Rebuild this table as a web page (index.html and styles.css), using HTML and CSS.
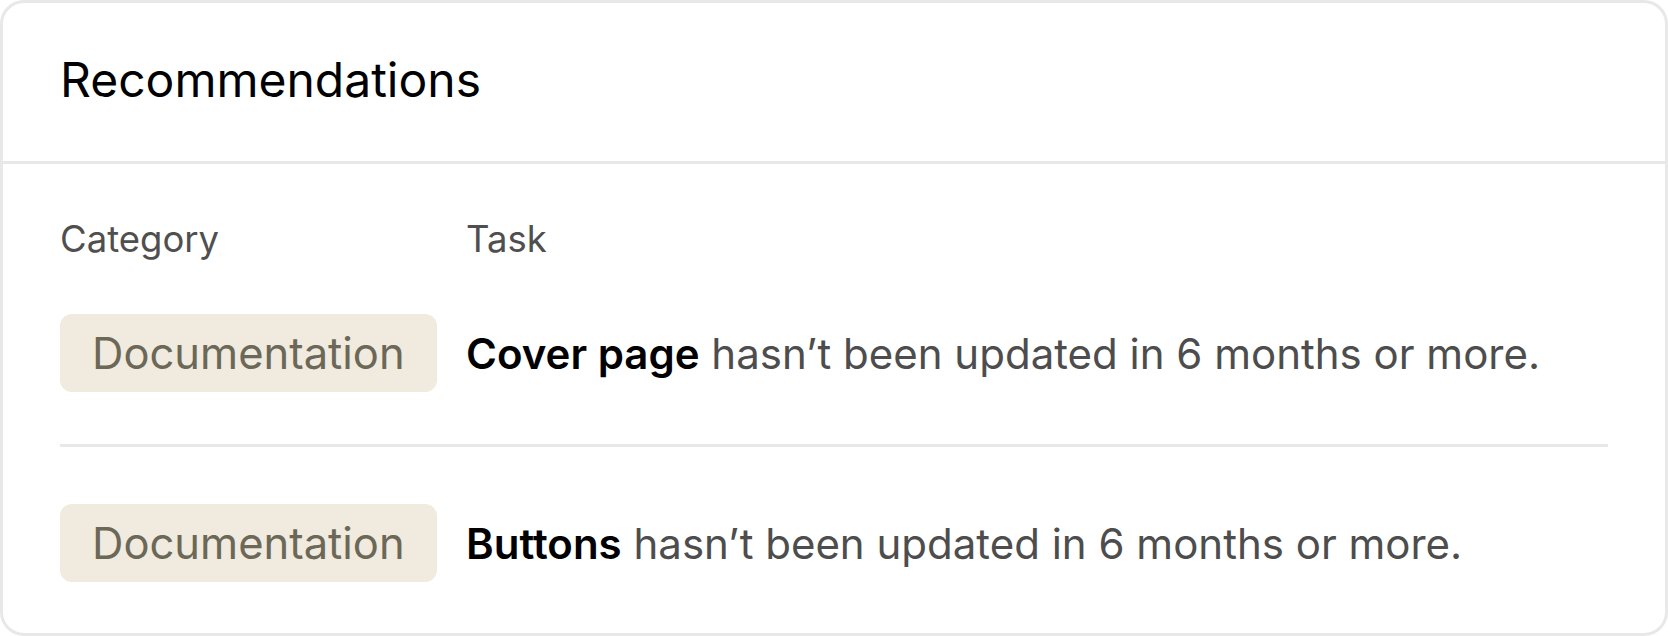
FILE: index.html
```html
<!DOCTYPE html>
<html lang="en">
<head>
<meta charset="utf-8">
<title>Recommendations</title>
<link rel="stylesheet" href="styles.css">
</head>
<body>
  <section class="card">
    <header class="card-header">
      <h1 class="card-title">Recommendations</h1>
    </header>
    <div class="card-body">
      <div class="table-head">
        <div class="col-category">Category</div>
        <div class="col-task">Task</div>
      </div>
      <div class="table-row">
        <div class="col-category"><span class="badge">Documentation</span></div>
        <div class="col-task"><strong>Cover page</strong> hasn’t been updated in 6 months or more.</div>
      </div>
      <div class="table-row">
        <div class="col-category"><span class="badge">Documentation</span></div>
        <div class="col-task"><strong>Buttons</strong> hasn’t been updated in 6 months or more.</div>
      </div>
    </div>
  </section>
</body>
</html>
```

FILE: styles.css
```css
* { box-sizing: border-box; }

html, body {
  margin: 0;
  padding: 0;
  background: #ffffff;
}

body {
  font-family: Inter, "Noto Sans", sans-serif;
  width: 1668px;
  height: 636px;
}

.card {
  width: 1668px;
  height: 636px;
  border: 3px solid #e8e8e8;
  border-radius: 24px;
  background: #ffffff;
  display: flex;
  flex-direction: column;
  overflow: hidden;
}

.card-header {
  height: 161px;
  flex: none;
  display: flex;
  align-items: center;
  padding: 0 57px;
  border-bottom: 3px solid #e8e8e8;
}

.card-title {
  margin: 0;
  font-size: 48px;
  font-weight: 400;
  line-height: 1.2;
  color: #000000;
  margin-top: -4px;
}

.card-body {
  padding: 54px 57px 0;
}

.table-head {
  display: flex;
  align-items: center;
  height: 42px;
  font-size: 36.5px;
  color: #4f4f4f;
}

.col-category {
  width: 406px;
  flex: none;
}

.col-task {
  flex: 1;
}

.table-row {
  display: flex;
  align-items: center;
  padding: 54px 0 52px;
  font-size: 42px;
  color: #4d4d4d;
}

.table-row + .table-row {
  border-top: 3px solid #e8e8e8;
  padding-top: 57px;
}

.table-row strong {
  color: #000000;
  font-weight: 600;
}

.badge {
  display: inline-flex;
  align-items: center;
  height: 78px;
  padding: 0 32px;
  border-radius: 12px;
  background: #f0eadf;
  color: #6b6857;
  font-size: 43.5px;
}
```
